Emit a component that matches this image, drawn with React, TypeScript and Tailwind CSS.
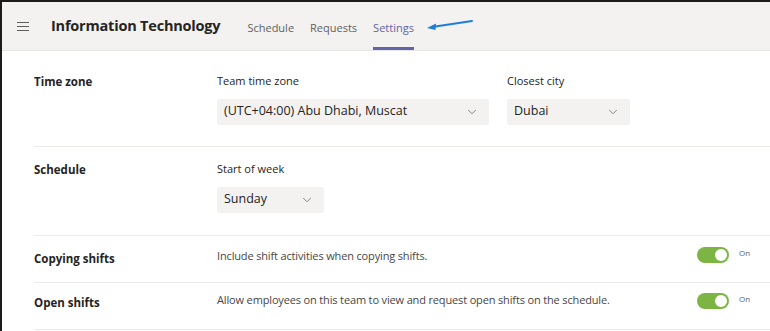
import { ChevronDown } from "lucide-react";

function Select({ value, width }: { value: string; width: string }) {
  return (
    <div
      className={`flex items-center justify-between h-[26px] rounded-[3px] bg-[#f3f2f1] pl-[7px] pr-[10px] text-[12.5px] text-[#252423] ${width}`}
    >
      <span>{value}</span>
      <ChevronDown size={14} strokeWidth={1.25} className="text-[#605e5c]" />
    </div>
  );
}

function Toggle() {
  return (
    <div className="flex items-center gap-[10px]">
      <div className="flex items-center justify-end w-[32px] h-[16px] rounded-full bg-[#7db544] pr-[2px]">
        <div className="w-[12px] h-[12px] rounded-full bg-white" />
      </div>
      <span className="text-[8px] text-[#605e5c] -mt-[4px]">On</span>
    </div>
  );
}

export default function App() {
  return (
    <div
      className="w-[770px] h-[331px] overflow-hidden bg-white border-t-2 border-l-2 border-[#1b1b1b]"
      style={{ fontFamily: '"Open Sans", "Noto Sans", sans-serif' }}
    >
      {/* Header */}
      <div className="flex items-center h-[49px] bg-[#f3f2f1] border-b border-[#e8e6e4]">
        <div className="flex flex-col gap-[3px] ml-[15px] w-[12px]">
          <div className="h-[1px] bg-[#605e5c]" />
          <div className="h-[1px] bg-[#605e5c]" />
          <div className="h-[1px] bg-[#605e5c]" />
        </div>
        <h1 className="ml-[22px] text-[14.5px] font-bold text-[#252423] tracking-[-0.2px]">
          Information Technology
        </h1>
        <div className="flex items-stretch h-full ml-[27px] gap-[16px] text-[11px]">
          <div className="flex items-center pt-[4px] text-[#616161]">Schedule</div>
          <div className="flex items-center pt-[4px] text-[#616161]">Requests</div>
          <div className="relative flex items-center pt-[4px] text-[#6264a7]">
            Settings
            <div className="absolute left-0 right-0 bottom-0 h-[3px] bg-[#6264a7]" />
          </div>
        </div>
        <svg width="48" height="12" viewBox="0 0 48 12" className="ml-[12px] -mt-[2px]">
          <line x1="6" y1="8" x2="46" y2="2" stroke="#1e7be0" strokeWidth="2" strokeLinecap="round" />
          <path d="M1 9 L10 4.5 L9.5 11 Z" fill="#1e7be0" />
        </svg>
      </div>

      {/* Content */}
      <div className="pl-[32px]">
        {/* Time zone */}
        <div className="flex h-[96px] border-b border-[#edebe9] pt-[22px]">
          <div className="w-[183px] text-[11.5px] font-bold text-[#252423]">Time zone</div>
          <div className="flex flex-col gap-[9px]">
            <span className="text-[11px] text-[#252423]">Team time zone</span>
            <Select value="(UTC+04:00) Abu Dhabi, Muscat" width="w-[272px]" />
          </div>
          <div className="flex flex-col gap-[9px] ml-[18px]">
            <span className="text-[11px] text-[#252423]">Closest city</span>
            <Select value="Dubai" width="w-[123px]" />
          </div>
        </div>

        {/* Schedule */}
        <div className="flex h-[89px] border-b border-[#edebe9] pt-[14px]">
          <div className="w-[183px] text-[11.5px] font-bold text-[#252423]">Schedule</div>
          <div className="flex flex-col gap-[9px]">
            <span className="text-[11px] text-[#252423]">Start of week</span>
            <Select value="Sunday" width="w-[107px]" />
          </div>
        </div>

        {/* Copying shifts */}
        <div className="flex items-start h-[47px] border-b border-[#edebe9] pt-[11px]">
          <div className="w-[183px] mt-[3px] text-[11.5px] font-bold text-[#252423]">Copying shifts</div>
          <div className="flex-1 mt-[1px] text-[11px] text-[#484644] tracking-[-0.15px]">
            Include shift activities when copying shifts.
          </div>
          <div className="w-[73px]">
            <Toggle />
          </div>
        </div>

        {/* Open shifts */}
        <div className="flex items-start h-[47px] border-b border-[#edebe9] pt-[10px]">
          <div className="w-[183px] mt-[1px] text-[11.5px] font-bold text-[#252423]">Open shifts</div>
          <div className="flex-1 -mt-[1px] text-[11px] text-[#484644] tracking-[-0.15px]">
            Allow employees on this team to view and request open shifts on the schedule.
          </div>
          <div className="w-[73px]">
            <Toggle />
          </div>
        </div>
      </div>
    </div>
  );
}
